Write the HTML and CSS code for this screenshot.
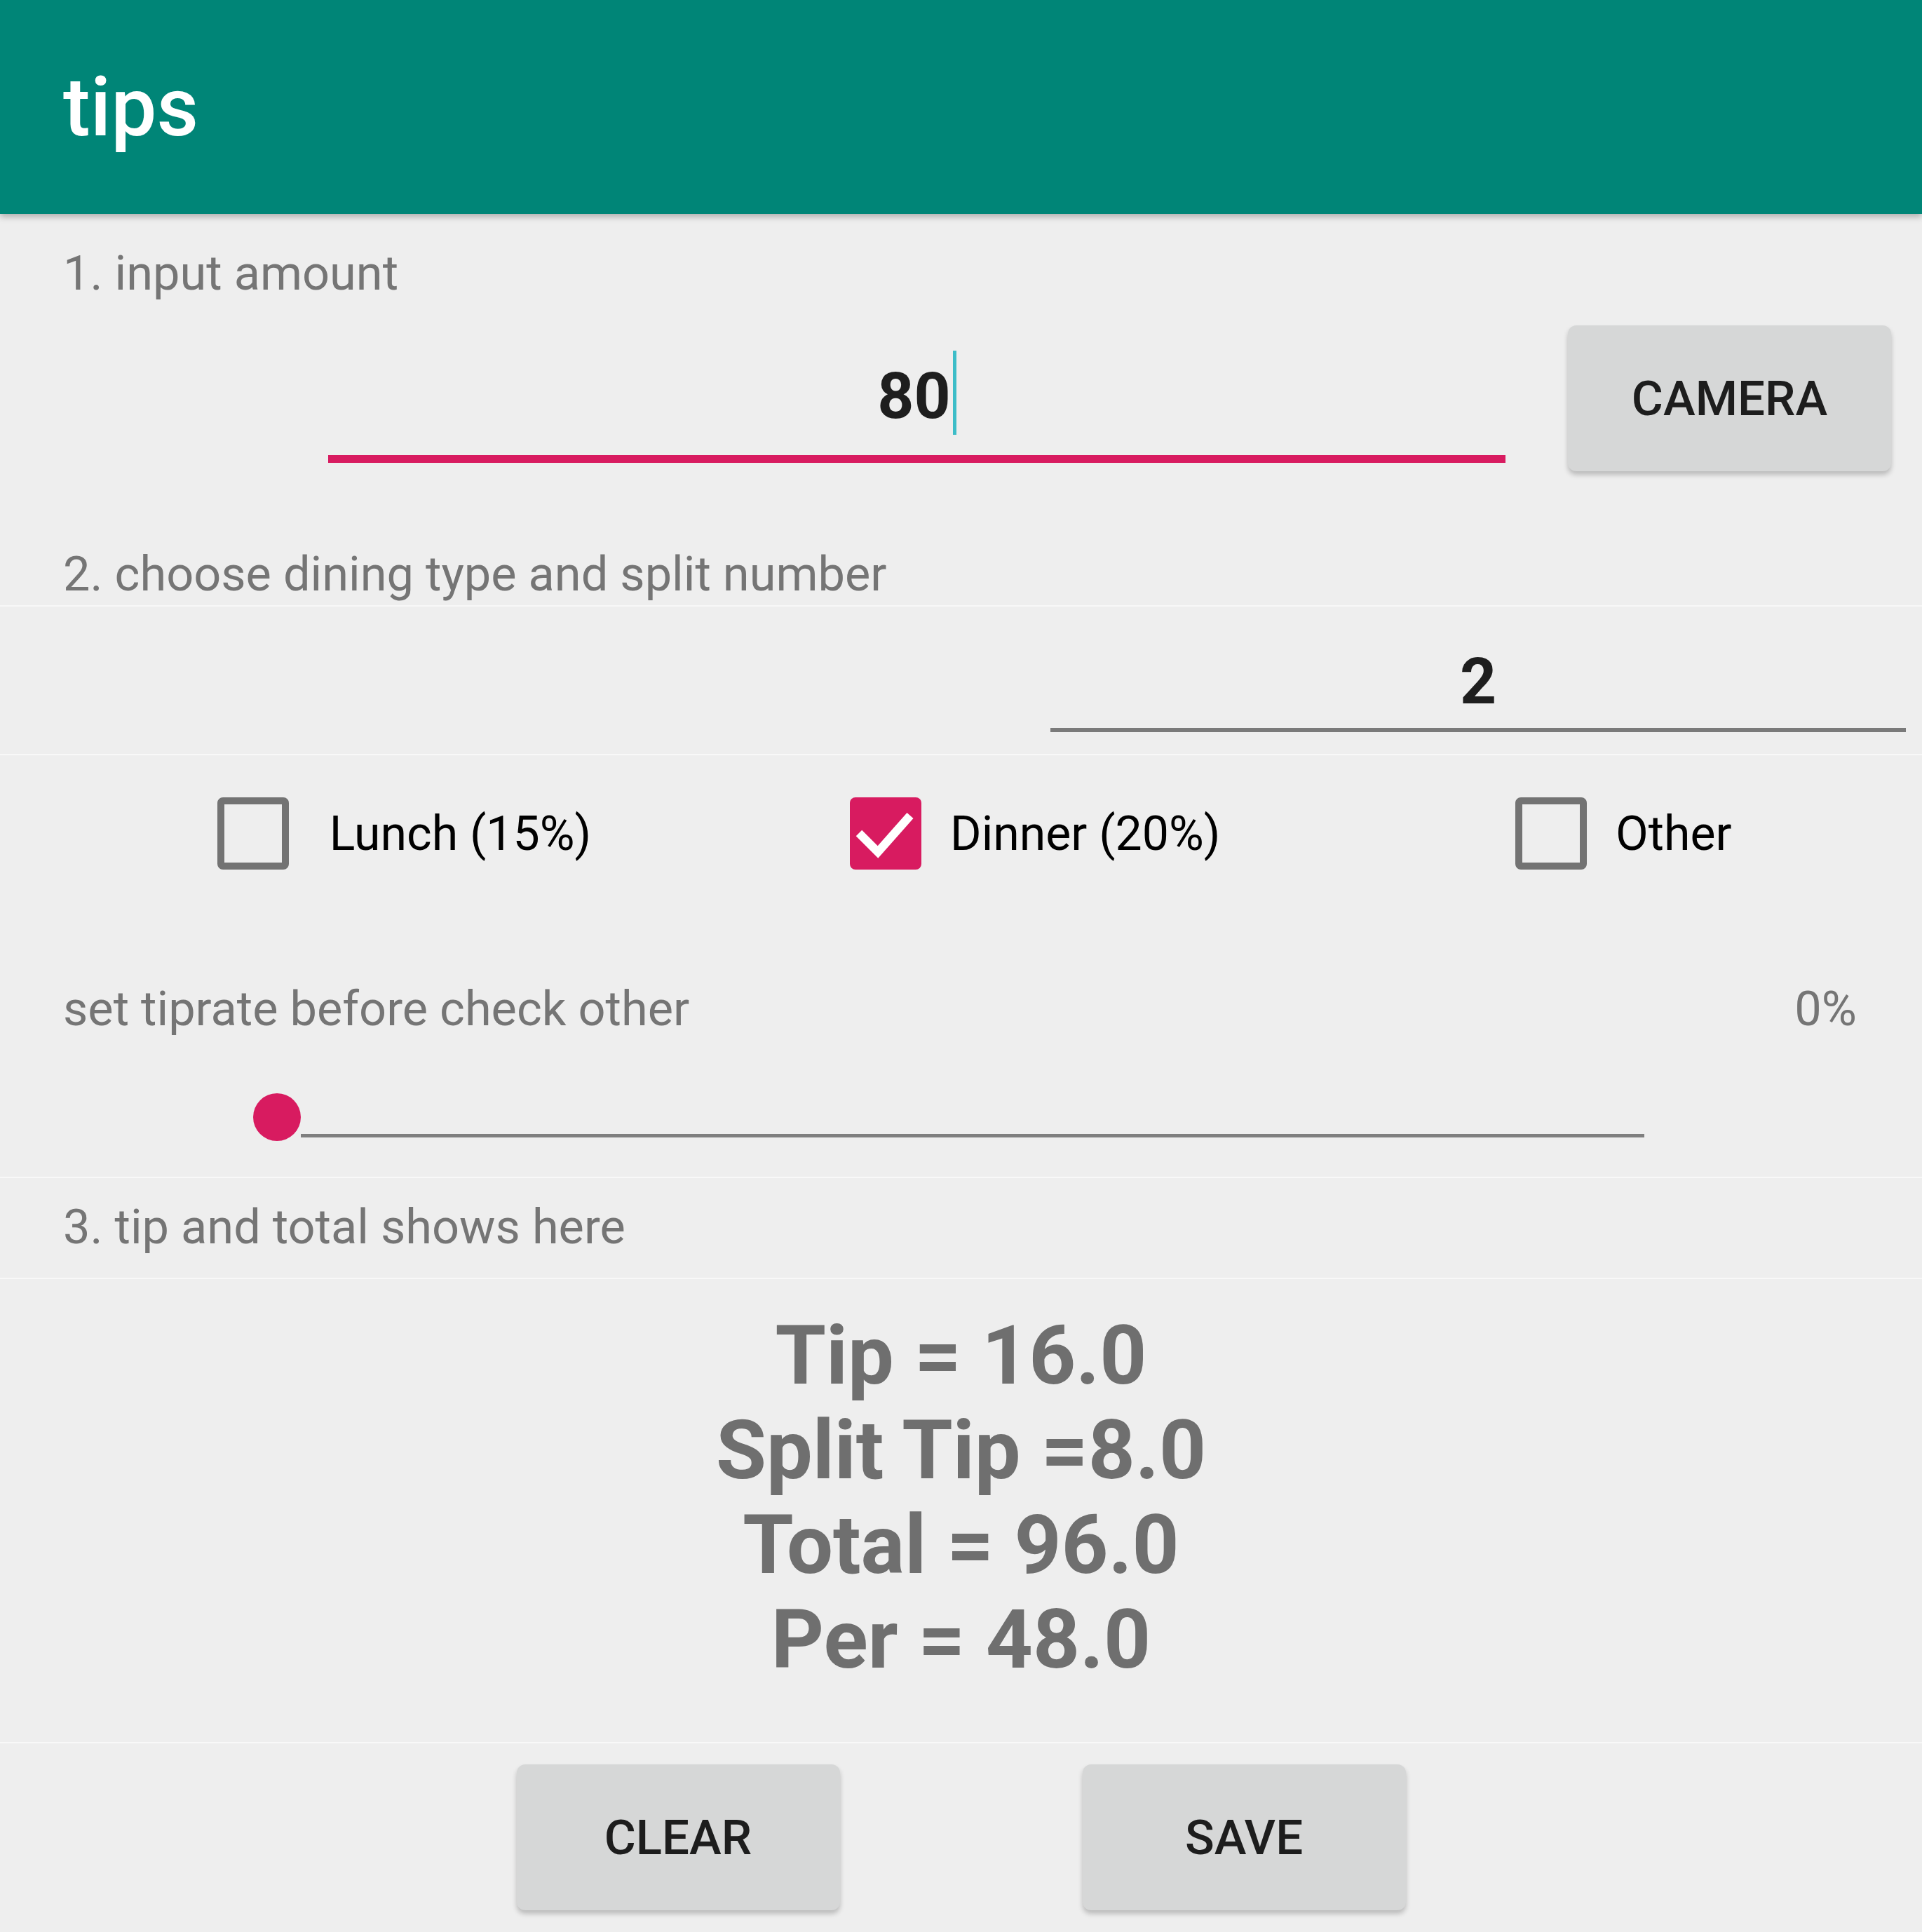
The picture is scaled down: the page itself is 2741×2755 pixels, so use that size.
FILE: index.html
```html
<!DOCTYPE html>
<html lang="en">
<head>
<meta charset="utf-8">
<title>tips</title>
<link rel="stylesheet" href="styles.css">
</head>
<body>
<header class="appbar">
  <h1 class="title">tips</h1>
</header>
<main class="content">
  <section class="sec sec-amount">
    <p class="label">1. input amount</p>
    <div class="amount-row">
      <div class="field field-active"><span class="value">80</span><span class="cursor"></span></div>
      <button class="btn">CAMERA</button>
    </div>
    <p class="label label-2">2. choose dining type and split number</p>
  </section>
  <section class="sec sec-split">
    <div class="field field-split"><span class="value">2</span></div>
  </section>
  <section class="sec sec-type">
    <div class="checks">
      <label class="check"><span class="box"></span><span class="check-text">&nbsp;Lunch (15%)</span></label>
      <label class="check"><span class="box box-on"><svg class="tick" viewBox="0 0 102 103" width="102" height="103"><polyline points="13,51 40,78 86,26" fill="none" stroke="#ffffff" stroke-width="12"/></svg></span><span class="check-text">Dinner (20%)</span></label>
      <label class="check"><span class="box"></span><span class="check-text">Other</span></label>
    </div>
    <div class="rate-row">
      <span class="label">set tiprate before check other</span>
      <span class="label">0%</span>
    </div>
    <div class="slider"><span class="thumb"></span><span class="track"></span></div>
  </section>
  <section class="sec sec-label3">
    <p class="label">3. tip and total shows here</p>
  </section>
  <section class="sec results">
    <p class="result">Tip = 16.0</p>
    <p class="result">Split Tip =8.0</p>
    <p class="result">Total = 96.0</p>
    <p class="result">Per = 48.0</p>
  </section>
  <section class="sec actions">
    <button class="btn">CLEAR</button>
    <button class="btn">SAVE</button>
  </section>
</main>
</body>
</html>
```
FILE: styles.css
```css
* { box-sizing: border-box; }
html, body {
  margin: 0;
  padding: 0;
  background: #eeeeee;
  font-family: Roboto, "Liberation Sans", sans-serif;
}
body { width: 2741px; min-height: 2755px; overflow: hidden; }

.appbar {
  position: relative;
  z-index: 2;
  height: 305px;
  background: #008577;
  display: flex;
  align-items: center;
  padding-left: 90px;
  box-shadow: 0 4px 9px rgba(0, 0, 0, 0.28);
}
.title {
  margin: 0;
  color: #ffffff;
  font-size: 116px;
  font-weight: 500;
  line-height: normal;
}

.sec { border-top: 2px solid #f8f8f8; }
.sec-amount { border-top: none; padding-top: 45px; padding-bottom: 4px; }

.label {
  margin: 0;
  padding-left: 90px;
  font-size: 68.5px;
  line-height: 80px;
  color: #757575;
}

.amount-row {
  display: flex;
  align-items: flex-start;
  margin-top: 34px;
  padding-left: 468px;
  gap: 89px;
}

.field {
  text-align: center;
  font-size: 91px;
  font-weight: 700;
  line-height: 110px;
  color: #1e1e1e;
}
.field-active {
  width: 1679px;
  padding-top: 46px;
  padding-bottom: 29px;
  border-bottom: 11px solid #d81b60;
}
.cursor {
  display: inline-block;
  width: 5px;
  height: 120px;
  margin-top: -10px;
  margin-left: 3px;
  background: #3dbdc8;
  vertical-align: -24px;
}

.btn {
  width: 461px;
  height: 208px;
  border: none;
  border-radius: 12px;
  background: #d6d7d7;
  color: #1d1d1d;
  font-family: Roboto, "Liberation Sans", sans-serif;
  font-size: 69px;
  font-weight: 500;
  box-shadow: 0 5px 7px rgba(0, 0, 0, 0.22);
  padding: 0;
}

.label-2 { margin-top: 107px; }

.sec-split { padding-top: 52px; padding-bottom: 31px; }
.field-split {
  margin-left: 1498px;
  width: 1220px;
  padding-bottom: 11px;
  border-bottom: 6px solid #7a7a7a;
}

.sec-type { padding-bottom: 51px; }
.checks {
  display: grid;
  grid-template-columns: 902px 949px auto;
  padding-top: 60px;
  padding-left: 310px;
}
.check {
  display: flex;
  align-items: center;
  gap: 41px;
  font-size: 68px;
  color: #000000;
}
.box {
  width: 102px;
  height: 103px;
  border: 10px solid #737373;
  border-radius: 8px;
  flex: none;
  position: relative;
}
.box-on {
  border: none;
  background: #d81b60;
}
.tick { display: block; }

.rate-row {
  display: flex;
  justify-content: space-between;
  margin-top: 159px;
  padding-right: 93px;
}
.rate-row .label:last-child { padding-left: 0; }

.slider {
  display: flex;
  align-items: flex-end;
  margin-top: 80px;
  padding-left: 361px;
}
.thumb {
  width: 68px;
  height: 68px;
  border-radius: 50%;
  background: #d81b60;
  flex: none;
}
.track {
  width: 1916px;
  height: 5px;
  margin-bottom: 5px;
  background: #7f7f7f;
}

.sec-label3 { padding-top: 30px; padding-bottom: 32px; }

.results {
  padding-top: 42px;
  padding-bottom: 78px;
  text-align: center;
}
.result {
  margin: 0;
  font-size: 117px;
  font-weight: 700;
  line-height: 135px;
  color: #6f6f6f;
}

.actions {
  display: flex;
  justify-content: center;
  gap: 346px;
  padding-top: 30px;
}
```
